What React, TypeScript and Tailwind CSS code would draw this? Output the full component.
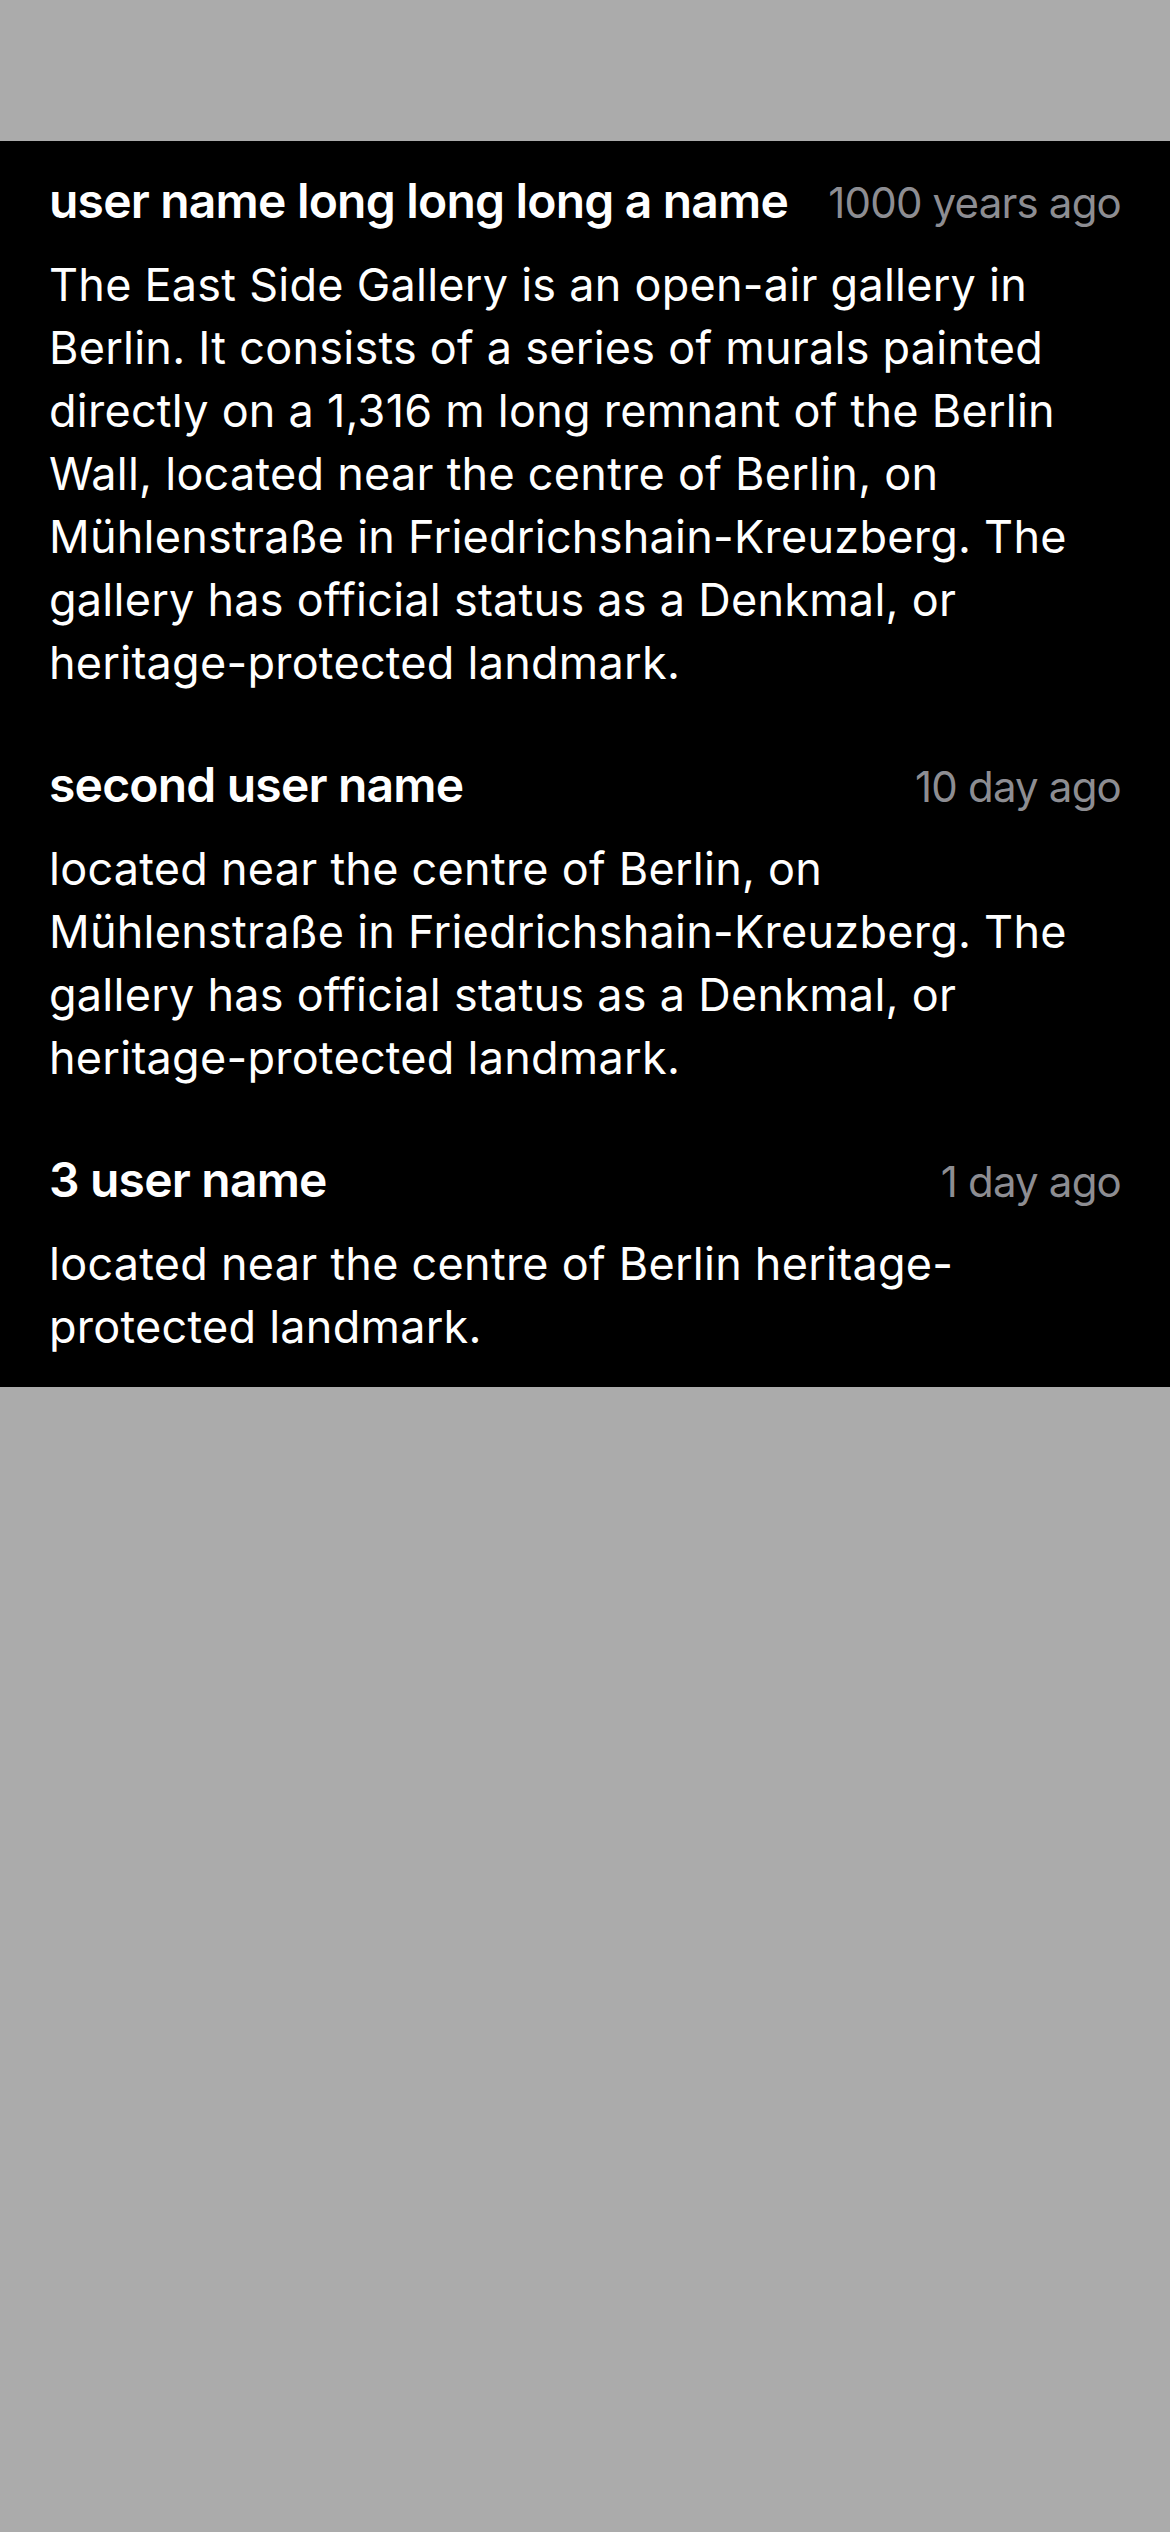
import React from "react";

const comments = [
  {
    name: "user name long long long a name",
    time: "1000 years ago",
    text: "The East Side Gallery is an open-air gallery in Berlin. It consists of a series of murals painted directly on a 1,316 m long remnant of the Berlin Wall, located near the centre of Berlin, on Mühlenstraße in Friedrichshain-Kreuzberg. The gallery has official status as a Denkmal, or heritage-protected landmark.",
  },
  {
    name: "second user name",
    time: "10 day ago",
    text: "located near the centre of Berlin, on Mühlenstraße in Friedrichshain-Kreuzberg. The gallery has official status as a Denkmal, or heritage-protected landmark.",
  },
  {
    name: "3 user name",
    time: "1 day ago",
    text: "located near the centre of Berlin heritage-protected landmark.",
  },
];

export default function App() {
  return (
    <div
      className="min-h-[2532px] w-[1170px] bg-[#ababab] pt-[141px]"
      style={{ fontFamily: "Inter, 'Noto Sans', sans-serif" }}
    >
      <div className="flex flex-col gap-[62px] bg-black px-[49px] pt-[31px] pb-[29px]">
        {comments.map((c) => (
          <div key={c.name} className="flex flex-col gap-[22px]">
            <div className="flex items-baseline justify-between gap-[32px]">
              <span className="min-w-0 whitespace-nowrap text-[48px] leading-[57px] font-semibold tracking-[-0.8px] text-white">
                {c.name}
              </span>
              <span className="shrink-0 whitespace-nowrap text-[42px] leading-[57px] tracking-[-0.8px] text-[#8d8d92]">
                {c.time}
              </span>
            </div>
            <p className="text-[45px] leading-[63px] tracking-[0.25px] text-white">
              {c.text}
            </p>
          </div>
        ))}
      </div>
    </div>
  );
}
